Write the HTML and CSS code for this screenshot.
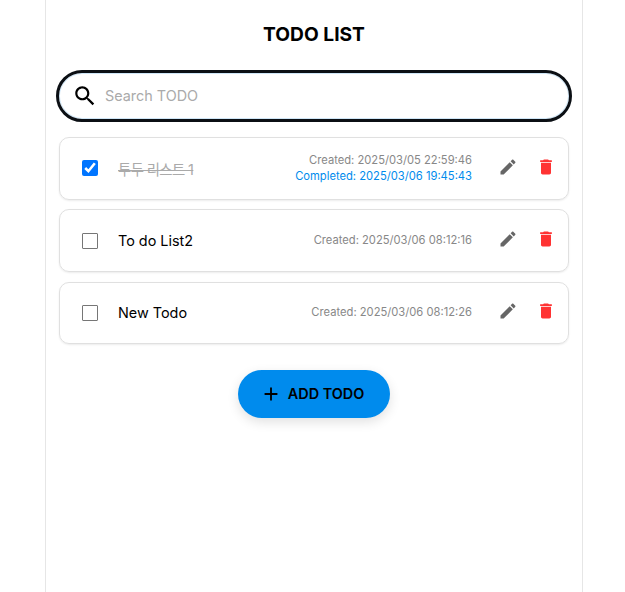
FILE: index.html
```html
<!DOCTYPE html>
<html lang="ko">
<head>
    <meta charset="UTF-8">
    <meta name="viewport" content="width=device-width, initial-scale=1.0">
    <title>TODO LIST</title>
    <link rel="stylesheet" href="styles.css">
</head>
<body>
    <div class="container">
        <h1 class="title">TODO LIST</h1>
        <div class="search">
            <svg class="search-icon" viewBox="0 0 24 24"><path d="M15.5 14h-.79l-.28-.27C15.41 12.59 16 11.11 16 9.5 16 5.91 13.09 3 9.5 3S3 5.91 3 9.5 5.91 16 9.5 16c1.61 0 3.09-.59 4.23-1.57l.27.28v.79l5 4.99L20.49 19l-4.99-5zm-6 0C7.01 14 5 11.99 5 9.5S7.01 5 9.5 5 14 7.01 14 9.5 11.99 14 9.5 14z"/></svg>
            <input class="search-input" type="text" placeholder="Search TODO">
        </div>
        <ul class="todo-list">
            <li class="todo-item done">
                <input class="check" type="checkbox" checked>
                <span class="todo-text">투두 리스트 1</span>
                <div class="dates">
                    <span>Created: 2025/03/05 22:59:46</span>
                    <span class="completed">Completed: 2025/03/06 19:45:43</span>
                </div>
                <div class="actions">
                    <svg class="icon edit" viewBox="0 0 24 24"><path d="M3 17.25V21h3.75L17.81 9.94l-3.75-3.75L3 17.25zM20.71 7.04c.39-.39.39-1.02 0-1.41l-2.34-2.34c-.39-.39-1.02-.39-1.41 0l-1.83 1.83 3.75 3.75 1.83-1.83z"/></svg>
                    <svg class="icon trash" viewBox="0 0 24 24"><path d="M6 19c0 1.1.9 2 2 2h8c1.1 0 2-.9 2-2V7H6v12zM19 4h-3.5l-1-1h-5l-1 1H5v2h14V4z"/></svg>
                </div>
            </li>
            <li class="todo-item">
                <input class="check" type="checkbox">
                <span class="todo-text">To do List2</span>
                <div class="dates">
                    <span>Created: 2025/03/06 08:12:16</span>
                </div>
                <div class="actions">
                    <svg class="icon edit" viewBox="0 0 24 24"><path d="M3 17.25V21h3.75L17.81 9.94l-3.75-3.75L3 17.25zM20.71 7.04c.39-.39.39-1.02 0-1.41l-2.34-2.34c-.39-.39-1.02-.39-1.41 0l-1.83 1.83 3.75 3.75 1.83-1.83z"/></svg>
                    <svg class="icon trash" viewBox="0 0 24 24"><path d="M6 19c0 1.1.9 2 2 2h8c1.1 0 2-.9 2-2V7H6v12zM19 4h-3.5l-1-1h-5l-1 1H5v2h14V4z"/></svg>
                </div>
            </li>
            <li class="todo-item">
                <input class="check" type="checkbox">
                <span class="todo-text">New Todo</span>
                <div class="dates">
                    <span>Created: 2025/03/06 08:12:26</span>
                </div>
                <div class="actions">
                    <svg class="icon edit" viewBox="0 0 24 24"><path d="M3 17.25V21h3.75L17.81 9.94l-3.75-3.75L3 17.25zM20.71 7.04c.39-.39.39-1.02 0-1.41l-2.34-2.34c-.39-.39-1.02-.39-1.41 0l-1.83 1.83 3.75 3.75 1.83-1.83z"/></svg>
                    <svg class="icon trash" viewBox="0 0 24 24"><path d="M6 19c0 1.1.9 2 2 2h8c1.1 0 2-.9 2-2V7H6v12zM19 4h-3.5l-1-1h-5l-1 1H5v2h14V4z"/></svg>
                </div>
            </li>
        </ul>
        <button class="add-button">
            <svg class="add-icon" viewBox="0 0 24 24"><path d="M19 13h-6v6h-2v-6H5v-2h6V5h2v6h6v2z"/></svg>
            ADD TODO
        </button>
    </div>
</body>
</html>
```

FILE: styles.css
```css
html, body {
    height: 100%;
}
body {
    margin: 0;
    overflow: hidden;
    background: #fff;
    font-family: Inter, "Noto Sans CJK KR", sans-serif;
    color: #000;
}
.container {
    box-sizing: border-box;
    width: 538px;
    height: 592px;
    margin-left: 45px;
    padding: 22px 13px 0 13px;
    border-left: 1px solid #e6e6e6;
    border-right: 1px solid #e6e6e6;
    display: flex;
    flex-direction: column;
    align-items: center;
}
.title {
    margin: 0 0 24px 0;
    font-size: 19.2px;
    line-height: 24px;
    font-weight: 700;
}
.search {
    box-sizing: border-box;
    align-self: stretch;
    margin: 0 -3px;
    height: 52px;
    display: flex;
    align-items: center;
    gap: 7px;
    padding: 0 13px;
    border: 3px solid #0b0f14;
    border-radius: 26px;
    box-shadow: inset 0 0 0 1px #cfe6f7;
}
.search-icon {
    width: 26px;
    height: 26px;
    flex: none;
    fill: #000;
}
.search-input {
    flex: 1;
    min-width: 0;
    border: none;
    outline: none;
    background: none;
    padding: 0 0 2px 0;
    font: 400 14.4px Inter, sans-serif;
}
.search-input::placeholder {
    color: #aaa;
    opacity: 1;
}
.todo-list {
    list-style: none;
    align-self: stretch;
    margin: 15px 0 0 0;
    padding: 0;
    display: flex;
    flex-direction: column;
    gap: 9.5px;
}
.todo-item {
    box-sizing: border-box;
    height: 62.8px;
    display: flex;
    align-items: center;
    padding: 0 12.5px 0 22px;
    border: 1px solid #e0e0e0;
    border-radius: 10px;
    box-shadow: 0 1px 2px rgba(0,0,0,0.08);
}
.check {
    width: 16px;
    height: 16px;
    margin: 0 20px 0 0;
    flex: none;
    accent-color: #0075ff;
}
.check:not(:checked) {
    appearance: none;
    border: 1px solid #767676;
    border-radius: 1px;
}
.todo-text {
    flex: 1;
    font-size: 14.4px;
}
.done .todo-text {
    color: #aaa;
    letter-spacing: -0.6px;
    text-decoration: line-through;
}
.dates {
    display: flex;
    flex-direction: column;
    align-items: flex-end;
    gap: 1px;
    font-size: 11.2px;
    line-height: 15px;
    color: #888;
}
.completed {
    color: #008bed;
}
.actions {
    display: flex;
    align-items: center;
    gap: 17.5px;
    margin-left: 26px;
    margin-top: -3px;
}
.icon {
    width: 20px;
    height: 20px;
    flex: none;
}
.edit { fill: #666; }
.trash { fill: #ff3333; }
.add-button {
    margin-top: 25.6px;
    width: 152px;
    height: 48px;
    display: flex;
    align-items: center;
    justify-content: center;
    gap: 5.7px;
    padding: 0 3.5px 0 0;
    border: none;
    border-radius: 24px;
    background: #008bed;
    color: #000;
    font: 600 14.4px Inter, sans-serif;
    box-shadow: 0 4px 12px rgba(0,0,0,0.12);
}
.add-icon {
    width: 22px;
    height: 22px;
    fill: #000;
}
```
